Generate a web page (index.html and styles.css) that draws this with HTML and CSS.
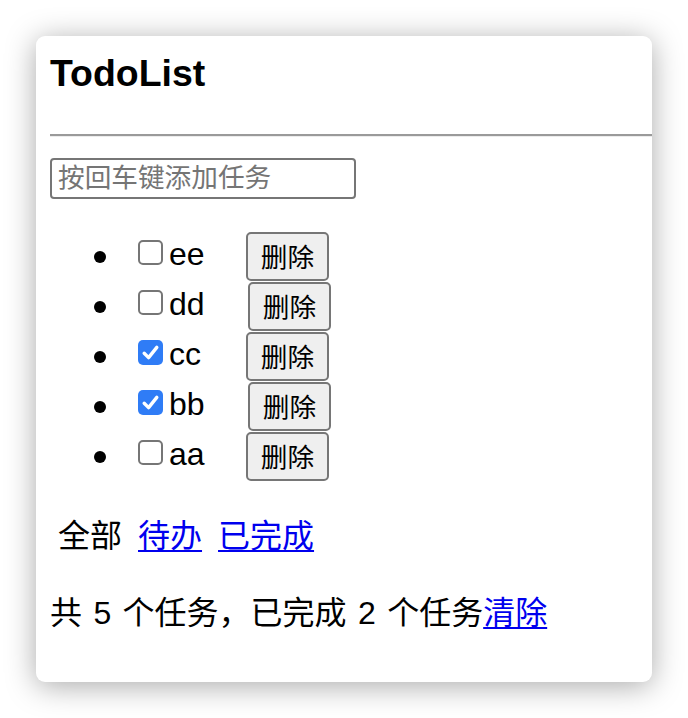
FILE: index.html
```html
<!DOCTYPE html>
<html lang="zh-CN">
<head>
<meta charset="utf-8">
<title>TodoList</title>
<link rel="stylesheet" href="styles.css">
</head>
<body>
<div class="card">
  <h3 class="title">TodoList</h3>
  <hr class="rule">
  <input class="new-todo" type="text" placeholder="按回车键添加任务">
  <ul class="todos">
    <li class="todo"><label class="todo-label"><input class="check" type="checkbox"><span class="todo-text">ee</span></label><button class="del">删除</button></li>
    <li class="todo"><label class="todo-label"><input class="check" type="checkbox"><span class="todo-text wide">dd</span></label><button class="del">删除</button></li>
    <li class="todo"><label class="todo-label"><input class="check" type="checkbox" checked><span class="todo-text">cc</span></label><button class="del">删除</button></li>
    <li class="todo"><label class="todo-label"><input class="check" type="checkbox" checked><span class="todo-text wide">bb</span></label><button class="del">删除</button></li>
    <li class="todo"><label class="todo-label"><input class="check" type="checkbox"><span class="todo-text">aa</span></label><button class="del">删除</button></li>
  </ul>
  <nav class="filters">
    <span class="filter">全部</span>
    <a class="filter link" href="#">待办</a>
    <a class="filter link" href="#">已完成</a>
  </nav>
  <p class="summary">共 5 个任务，已完成 2 个任务<a class="link" href="#">清除</a></p>
</div>
</body>
</html>
```
FILE: styles.css
```css
html, body {
  margin: 0;
  padding: 0;
  background: #ffffff;
}
body {
  padding: 36px;
  font-family: "Liberation Sans", Arial, "Noto Sans CJK SC", sans-serif;
  color: #000;
}
.card {
  box-sizing: border-box;
  width: 616px;
  height: 646px;
  background: #fff;
  border-radius: 9px;
  box-shadow: 0 4px 30px rgba(0, 0, 0, 0.34);
  padding: 15px 0 0 14px;
  overflow: hidden;
}
.title {
  margin: 0;
  font-size: 37.44px;
  line-height: 44px;
  font-weight: bold;
}
.rule {
  margin: 39px 0 0 0;
  border: 0;
  border-top: 2px solid #9a9a9a;
  border-bottom: 1px solid #ececec;
  height: 0;
}
.new-todo {
  display: block;
  box-sizing: border-box;
  margin: 21px 0 0 0;
  width: 306px;
  height: 41px;
  border: 2px solid #767676;
  border-radius: 4px;
  padding: 0 6px;
  font-family: "Liberation Sans", "Noto Sans CJK SC", sans-serif;
  font-size: 26.67px;
  outline: none;
}
.new-todo::placeholder {
  color: #757575;
}
.todos {
  list-style: none;
  margin: 32px 0 0 0;
  padding: 0;
}
.todo {
  display: flex;
  align-items: center;
  height: 50px;
  font-size: 32px;
}
.todo::before {
  content: "";
  width: 12px;
  height: 12px;
  border-radius: 50%;
  background: #000;
  margin-left: 44px;
  margin-top: 2px;
}
.todo-label {
  display: flex;
  align-items: center;
  margin-left: 32px;
}
.check {
  appearance: none;
  -webkit-appearance: none;
  box-sizing: border-box;
  width: 25px;
  height: 25px;
  margin: 0 6px 8px 0;
  border: 2px solid #767676;
  border-radius: 5px;
  background: #fff;
}
.check:checked {
  border: 0;
  background: #2f7cf6 url("data:image/svg+xml,%3Csvg xmlns='http://www.w3.org/2000/svg' viewBox='0 0 25 25'%3E%3Cpath d='M6.2 13.2 L10.6 17.6 L18.8 7.4' fill='none' stroke='white' stroke-width='3.4' stroke-linecap='round' stroke-linejoin='round'/%3E%3C/svg%3E") center / 25px 25px no-repeat;
}
.todo-text {
  min-width: 36px;
  line-height: 40px;
  margin-bottom: 4px;
}
.todo-text.wide {
  min-width: 38px;
}
.del {
  box-sizing: border-box;
  margin-left: 41px;
  width: 83px;
  height: 49px;
  padding: 0 0 1px 0;
  border: 2px solid #767676;
  border-radius: 5px;
  background: #efefef;
  font-family: "Liberation Sans", "Noto Sans CJK SC", sans-serif;
  font-size: 26.67px;
  color: #000;
}
.filters {
  display: flex;
  gap: 16px;
  margin-top: 35px;
  padding-left: 8px;
  font-size: 32px;
  line-height: 40px;
}
.link {
  color: #0000ee;
  text-decoration: underline;
  text-underline-offset: 3px;
  text-decoration-thickness: 2px;
}
.summary {
  margin: 37px 0 0 0;
  font-size: 32px;
  line-height: 40px;
  word-spacing: 2.5px;
}
```
